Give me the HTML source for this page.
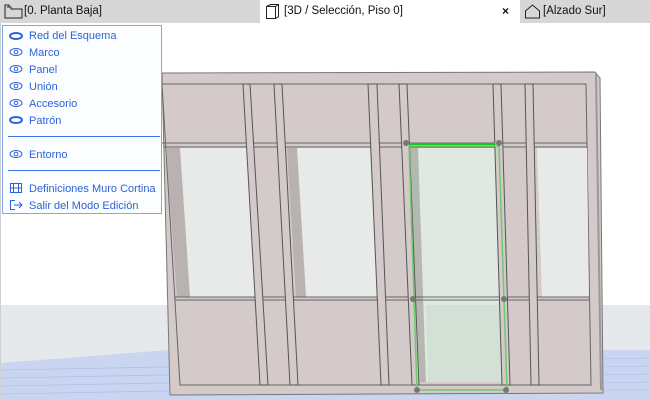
<!DOCTYPE html>
<html><head><meta charset="utf-8"><style>
*{margin:0;padding:0;box-sizing:border-box}
body{width:650px;height:400px;overflow:hidden;background:#fff;font-family:"Liberation Sans",sans-serif;position:relative}
.tabs{position:absolute;left:0;top:0;width:650px;height:23px;background:#d7d7d7}
.tab{position:absolute;top:0;height:23px;font-size:11.5px;line-height:23px;color:#111}
.menu{position:absolute;left:2px;top:25px;width:160px;height:189px;background:#fcfdfe;border:1px solid #82a6ea}
.it{position:absolute;left:26px;font-size:11px;color:#2b63dc;line-height:13px}
.ic{position:absolute;left:6px}
.sep{position:absolute;left:5px;width:152px;height:1px;background:#3b74e4}
</style></head><body>
<svg width="650" height="400" style="position:absolute;left:0;top:0">
<rect x="0" y="22" width="1" height="378" fill="#d0d0d0"/>
<rect x="1" y="305" width="649" height="95" fill="#e5e9eb"/>
<polygon points="1,363 170,350 650,350 650,400 1,400" fill="#c9d5f1"/>
<g stroke="#a9bbea" stroke-width="0.6">
<line x1="1" y1="370" x2="650" y2="358"/><line x1="1" y1="378" x2="650" y2="366"/><line x1="1" y1="386" x2="650" y2="374"/><line x1="1" y1="394" x2="650" y2="382"/><line x1="170" y1="390" x2="650" y2="390"/>
</g>
<polygon points="162,73 595,72 600,78 603,393 170,395" fill="#d3cac9" stroke="#777" stroke-width="1"/>
<polygon points="162,84 586,84 591,385 180,385" fill="#d3cac9" stroke="#666" stroke-width="1"/>
<line x1="596" y1="73" x2="601" y2="390" stroke="#999" stroke-width="2"/>
<polygon points="166,148 250,148 257,297 177,297" fill="#b8b2b1"/>
<polygon points="180,148 250,148 257,297 190,297" fill="#e8eae9"/>
<polygon points="287,148 370,148 377,297 296,297" fill="#b8b2b1"/>
<polygon points="297,148 370,148 377,297 306,297" fill="#e8eae9"/>
<polygon points="409,146 499,146 505,382 420,382" fill="#b4b8b0"/>
<polygon points="418,148 495,148 502,382 426,382" fill="#dfe9e2"/>
<polygon points="426,305 500,305 502,382 428,382" fill="#d3e0d6"/>
<polygon points="537,148 587,148 589,297 542,297" fill="#e8eae9"/>
<g stroke="#666" stroke-width="1" fill="none">
<line x1="162" y1="143" x2="587" y2="143"/><line x1="164" y1="147" x2="587" y2="147"/>
<line x1="175" y1="297" x2="589" y2="297"/><line x1="175" y1="300" x2="589" y2="300"/>
</g>
<g fill="#d3cac9" stroke="#555" stroke-width="1">
<polygon points="243,84 250,84 268,385 260,385"/>
<polygon points="274,84 282,84 298,385 290,385"/>
<polygon points="368,84 377,84 389,385 381,385"/>
<polygon points="399,84 407,84 419,385 412,385"/>
<polygon points="493,84 501,84 510,385 502,385"/>
<polygon points="525,84 533,84 539,385 531,385"/>
</g>
<polygon points="409,146 499,146 507,390 417,390" fill="none" stroke="#6ccb6c" stroke-width="1.5"/>
<line x1="409" y1="144" x2="495" y2="144" stroke="#11cc11" stroke-width="2"/>
<g fill="#777"><circle cx="406" cy="143" r="3"/><circle cx="499" cy="143" r="3"/><circle cx="413" cy="299" r="3"/><circle cx="504" cy="299" r="3"/><circle cx="417" cy="390" r="3"/><circle cx="506" cy="390" r="3"/></g>
</svg>
<div class="tabs">
<div class="tab" style="left:260px;width:260px;background:#fff"></div>
<svg style="position:absolute;left:4px;top:3px" width="20" height="17"><path d="M1 2h4v2h2v2h11v9H1z" fill="none" stroke="#222"/><path d="M3 4h2" stroke="#222"/></svg>
<div class="tab" style="left:24px">[0. Planta Baja]</div>
<svg style="position:absolute;left:265px;top:3px" width="16" height="17"><path d="M1.5 3.5l4-2h8v12l-3 2h-9z M10.5 3.5v12 M1.5 3.5h9l3-2" fill="none" stroke="#222"/></svg>
<div class="tab" style="left:284px">[3D / Selección, Piso 0]</div>
<div class="tab" style="left:502px;font-size:12px;font-weight:bold">×</div>
<svg style="position:absolute;left:524px;top:3px" width="18" height="17"><path d="M1.5 8l7-6 7 6v7h-14z" fill="none" stroke="#222"/></svg>
<div class="tab" style="left:543px">[Alzado Sur]</div>
</div>
<div class="menu">
<svg class="ic" style="top:5px" width="16" height="10"><ellipse cx="7" cy="5" rx="6" ry="3" fill="none" stroke="#2b63dc" stroke-width="2"/></svg>
<div class="it" style="top:4px">Red del Esquema</div>
<svg class="ic" style="top:21px" width="16" height="10"><ellipse cx="7" cy="5" rx="6" ry="3.5" fill="none" stroke="#2b63dc"/><circle cx="7" cy="5" r="1.8" fill="none" stroke="#2b63dc"/></svg>
<div class="it" style="top:21px">Marco</div>
<svg class="ic" style="top:38px" width="16" height="10"><ellipse cx="7" cy="5" rx="6" ry="3.5" fill="none" stroke="#2b63dc"/><circle cx="7" cy="5" r="1.8" fill="none" stroke="#2b63dc"/></svg>
<div class="it" style="top:38px">Panel</div>
<svg class="ic" style="top:55px" width="16" height="10"><ellipse cx="7" cy="5" rx="6" ry="3.5" fill="none" stroke="#2b63dc"/><circle cx="7" cy="5" r="1.8" fill="none" stroke="#2b63dc"/></svg>
<div class="it" style="top:55px">Unión</div>
<svg class="ic" style="top:72px" width="16" height="10"><ellipse cx="7" cy="5" rx="6" ry="3.5" fill="none" stroke="#2b63dc"/><circle cx="7" cy="5" r="1.8" fill="none" stroke="#2b63dc"/></svg>
<div class="it" style="top:72px">Accesorio</div>
<svg class="ic" style="top:89px" width="16" height="10"><ellipse cx="7" cy="5" rx="6" ry="3" fill="none" stroke="#2b63dc" stroke-width="2"/></svg>
<div class="it" style="top:89px">Patrón</div>
<div class="sep" style="top:110px"></div>
<svg class="ic" style="top:123px" width="16" height="10"><ellipse cx="7" cy="5" rx="6" ry="3.5" fill="none" stroke="#2b63dc"/><circle cx="7" cy="5" r="1.8" fill="none" stroke="#2b63dc"/></svg>
<div class="it" style="top:123px">Entorno</div>
<div class="sep" style="top:144px"></div>
<svg class="ic" style="top:156px" width="14" height="12"><rect x="1.5" y="1.5" width="11" height="9" fill="none" stroke="#2b63dc"/><path d="M4.5 1.5v9M9.5 1.5v9M1.5 6h11" stroke="#2b63dc"/></svg>
<div class="it" style="top:157px">Definiciones Muro Cortina</div>
<svg class="ic" style="top:173px" width="14" height="12"><path d="M6 1.5H1.5v9H6M5 6h8M10 3l3 3-3 3" fill="none" stroke="#2b63dc"/></svg>
<div class="it" style="top:174px">Salir del Modo Edición</div>
</div>
</body></html>
